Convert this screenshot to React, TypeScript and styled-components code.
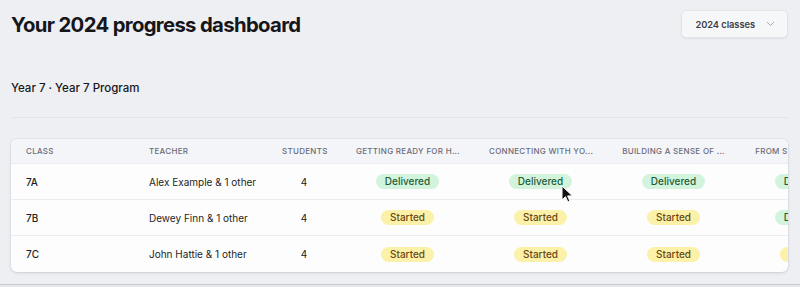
import * as React from "react";
import styled, { createGlobalStyle } from "styled-components";

const GlobalStyle = createGlobalStyle`
    html, body {
        margin: 0;
        padding: 0;
        background: #eeeff3;
        font-family: Inter, "Noto Sans", sans-serif;
        color: #16161a;
    }
    * {
        box-sizing: border-box;
    }
`;

const Page = styled.div`
    position: relative;
    height: 287px;
    overflow: hidden;
    padding: 0 12px 0 11px;
`;

const TopBar = styled.div`
    display: flex;
    justify-content: space-between;
    align-items: center;
    padding-top: 10px;
`;

const Title = styled.h1`
    margin: 0;
    font-size: 20.3px;
    font-weight: 700;
    letter-spacing: -0.032em;
`;

const SelectButton = styled.button`
    display: flex;
    align-items: center;
    gap: 11px;
    height: 28px;
    padding: 0 12px 0 13px;
    border: 1px solid #e3e4e9;
    border-radius: 5px;
    background: #f6f7f9;
    box-shadow: 0 1px 2px rgba(20, 20, 40, 0.06);
    font-family: inherit;
    font-size: 9.3px;
    font-weight: 600;
    letter-spacing: -0.005em;
    color: #3e3f48;
`;

const SectionTitle = styled.h2`
    margin: 42px 0 0;
    font-size: 11.5px;
    font-weight: 500;
    line-height: 16px;
`;

const Divider = styled.hr`
    margin: 21px 0 0;
    border: 0;
    border-top: 1px solid #e4e5ea;
`;

const Card = styled.div`
    margin-top: 21px;
    background: #fdfdfe;
    border-radius: 6px;
    box-shadow: 0 1px 3px rgba(20, 20, 50, 0.12), 0 0 0 1px rgba(20, 20, 50, 0.03);
    overflow: hidden;
`;

const COLS = "123px 133px 74px 133px 133px 133px 133px";

const HeadRow = styled.div`
    display: grid;
    grid-template-columns: ${COLS};
    height: 25px;
    align-items: center;
    background: #f4f5f8;
    border-bottom: 1px solid #ebecf0;
`;

const BodyRow = styled.div<{ $last?: boolean }>`
    display: grid;
    grid-template-columns: ${COLS};
    height: 36px;
    align-items: center;
    border-bottom: ${(p) => (p.$last ? "none" : "1px solid #ecedf1")};
`;

const HeadCell = styled.div<{ $center?: boolean }>`
    padding: 0 15px;
    font-size: 8px;
    font-weight: 500;
    letter-spacing: 0.035em;
    text-transform: uppercase;
    color: #6b6c78;
    text-align: ${(p) => (p.$center ? "center" : "left")};
    white-space: nowrap;
`;

const Cell = styled.div<{ $center?: boolean; $bold?: boolean }>`
    padding: 0 15px;
    font-size: 10px;
    font-weight: ${(p) => (p.$bold ? 500 : 400)};
    color: #1d1d22;
    text-align: ${(p) => (p.$center ? "center" : "left")};
    white-space: nowrap;
`;

const Pill = styled.span<{ $status: "Delivered" | "Started" }>`
    display: inline-block;
    padding: 0 9px;
    height: 15px;
    line-height: 15px;
    border-radius: 8px;
    font-size: 10px;
    font-weight: 500;
    background: ${(p) => (p.$status === "Delivered" ? "#d2f4dc" : "#fbf1a9")};
    color: ${(p) => (p.$status === "Delivered" ? "#235c38" : "#6a4812")};
`;

const BottomEdge = styled.div`
    position: absolute;
    left: 0;
    right: 0;
    bottom: 0;
    height: 3px;
    border-top: 1px solid #c9cacf;
    background: #e6e7eb;
`;

const Cursor = styled.svg`
    position: absolute;
    left: 561px;
    top: 185px;
`;

const headers = [
    "Class",
    "Teacher",
    "Students",
    "Getting ready for h...",
    "Connecting with yo...",
    "Building a sense of ...",
    "From strengths to ...",
];

type Status = "Delivered" | "Started";

const rows: { cls: string; teacher: string; students: number; units: Status[] }[] = [
    { cls: "7A", teacher: "Alex Example & 1 other", students: 4, units: ["Delivered", "Delivered", "Delivered", "Delivered"] },
    { cls: "7B", teacher: "Dewey Finn & 1 other", students: 4, units: ["Started", "Started", "Started", "Delivered"] },
    { cls: "7C", teacher: "John Hattie & 1 other", students: 4, units: ["Started", "Started", "Started", "Started"] },
];

export default function App() {
    return (
        <Page>
            <GlobalStyle />
            <TopBar>
                <Title>Your 2024 progress dashboard</Title>
                <SelectButton>
                    2024 classes
                    <svg width="9" height="6" viewBox="0 0 9 6" fill="none">
                        <path d="M1 1l3.5 3.5L8 1" stroke="#a9aab3" strokeWidth="1" />
                    </svg>
                </SelectButton>
            </TopBar>

            <SectionTitle>Year 7 · Year 7 Program</SectionTitle>
            <Divider />

            <Card>
                <HeadRow>
                    {headers.map((h, i) => (
                        <HeadCell key={h} $center={i >= 2}>
                            {h}
                        </HeadCell>
                    ))}
                </HeadRow>
                {rows.map((r, i) => (
                    <BodyRow key={r.cls} $last={i === rows.length - 1}>
                        <Cell $bold>{r.cls}</Cell>
                        <Cell>{r.teacher}</Cell>
                        <Cell $center>{r.students}</Cell>
                        {r.units.map((u, j) => (
                            <Cell key={j} $center>
                                <Pill $status={u}>{u}</Pill>
                            </Cell>
                        ))}
                    </BodyRow>
                ))}
            </Card>

            <Cursor width="12" height="18" viewBox="0 0 12 18">
                <path d="M1 1v14l3.5-3.3 2.4 5.3 2-0.9-2.3-5.2h4.9z" fill="#111" stroke="#fff" strokeWidth="1" />
            </Cursor>
            <BottomEdge />
        </Page>
    );
}
